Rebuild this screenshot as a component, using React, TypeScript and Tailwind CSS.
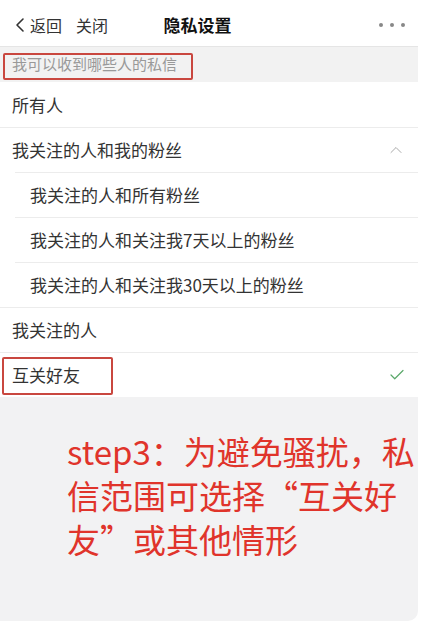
import { Check, ChevronLeft, ChevronUp } from 'lucide-react';

const font = { fontFamily: '"Noto Sans CJK SC", "Noto Sans", sans-serif' };

const Row = ({ label, sub, right, boxed, first }: { label: string; sub?: boolean; right?: React.ReactNode; boxed?: boolean; first?: boolean }) => (
  <div className="relative bg-white">
    {!first && <div className={`absolute right-0 top-0 border-t border-[#ececec] ${sub ? 'left-[15px]' : 'left-0'}`} />}
    <div className={`flex h-[45px] items-center ${sub ? 'pl-[30px]' : 'pl-3'} pr-3`}>
      <span className="flex-1 text-[17px] text-[#333]">{label}</span>
      {right}
    </div>
    {boxed && (
      <div className="pointer-events-none absolute left-[2px] top-[5px] h-[38px] w-[111px] rounded-[2px] border-2 border-[#c9473f]" />
    )}
  </div>
);

const App = () => {
  return (
    <div className="h-[625px] w-[428px] overflow-hidden bg-white" style={font}>
      <div className="w-[418px]">
        <div className="flex h-[47px] items-center border-b border-[#e5e5e5] px-2 pt-[3px]">
          <div className="flex items-center text-[16px] text-[#333]">
            <ChevronLeft className="-mr-0.5 h-6 w-6" strokeWidth={1.6} />
            <span>返回</span>
            <span className="ml-[14px]">关闭</span>
          </div>
          <div className="flex-1 pr-[92px] text-center text-[17px] font-bold text-[#111]">隐私设置</div>
          <div className="flex gap-[7px] pr-[5px]">
            <span className="h-[4px] w-[4px] rounded-full bg-[#888]" />
            <span className="h-[4px] w-[4px] rounded-full bg-[#888]" />
            <span className="h-[4px] w-[4px] rounded-full bg-[#888]" />
          </div>
        </div>

        <div className="relative flex h-[35px] items-center bg-[#f2f2f2] pl-3">
          <span className="text-[15px] text-[#999]">我可以收到哪些人的私信</span>
          <div className="pointer-events-none absolute left-[3px] top-[6px] h-[27px] w-[190px] rounded-[2px] border-2 border-[#c9473f]" />
        </div>

        <Row label="所有人" first />
        <Row label="我关注的人和我的粉丝" right={<ChevronUp className="h-5 w-5 text-[#aaa]" strokeWidth={1.2} />} />
        <Row label="我关注的人和所有粉丝" sub />
        <Row label="我关注的人和关注我7天以上的粉丝" sub />
        <Row label="我关注的人和关注我30天以上的粉丝" sub />
        <Row label="我关注的人" />
        <Row label="互关好友" boxed right={<Check className="h-[18px] w-[18px] text-[#5aa86a]" strokeWidth={1.6} />} />

        <div className="h-[224px] rounded-br-[10px] bg-[#f2f2f3] pl-[67px] pt-[32px]">
          <p className="text-[33px] leading-[44px] text-[#e0342b]">
            step3：为避免骚扰，私信范围可选择“互关好友”或其他情形
          </p>
        </div>
      </div>
    </div>
  );
};

export default App;
